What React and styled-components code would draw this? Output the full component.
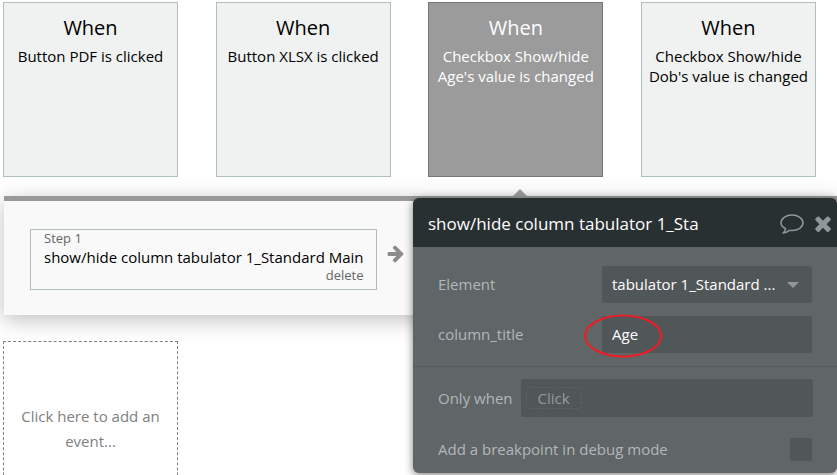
import React from 'react';
import styled, { createGlobalStyle } from 'styled-components';

const GlobalStyle = createGlobalStyle`
  * {
    box-sizing: border-box;
  }
  body {
    margin: 0;
    background: #fff;
    color: #000;
    font-family: "Open Sans", "Noto Sans", sans-serif;
    font-size: 15px;
  }
  button, input, select {
    font: inherit;
  }
`;

const Workflow = styled.main`
  position: relative;
  height: 100vh;
  padding: 2px 0 0 3px;
  overflow: hidden;
`;

const Events = styled.section`
  display: flex;
  justify-content: space-between;
  padding-right: 21px;
`;

const EventCard = styled.button`
  display: flex;
  flex-direction: column;
  align-items: center;
  width: 175px;
  height: 175px;
  padding: 11px 6px;
  border: 1px solid ${({ $active }) => ($active ? '#757575' : '#b0bec0')};
  border-radius: 0;
  background: ${({ $active }) => ($active ? '#9b9b9b' : '#f0f2f1')};
  color: ${({ $active }) => ($active ? '#fff' : '#000')};
  line-height: 20px;
  text-align: center;
`;

const When = styled.span`
  margin-bottom: 4px;
  font-size: 20px;
  line-height: 28px;
`;

const Actions = styled.section`
  position: relative;
  display: flex;
  align-items: center;
  gap: 10px;
  height: 119px;
  margin: 19px 0 26px 1px;
  padding: 3px 26px 0;
  border-top: 5px solid #999;
  background: #f9f9f9;
  box-shadow: 0 5px 20px rgba(0, 0, 0, 0.25);
`;

const Pointer = styled.span`
  position: absolute;
  top: -12px;
  left: 508px;
  border: solid transparent;
  border-width: 0 8px 8px;
  border-bottom-color: #999;
`;

const Step = styled.article`
  display: flex;
  flex-direction: column;
  padding: 0 12px 5px 13px;
  border: 1px solid #b0bec0;
  white-space: nowrap;
`;

const StepNumber = styled.span`
  color: #666;
  font-size: 13px;
  line-height: 17px;
`;

const StepName = styled.span`
  line-height: 20px;
`;

const Delete = styled.button`
  align-self: flex-end;
  padding: 0;
  border: 0;
  background: none;
  color: #666;
  font-size: 13px;
  line-height: 17px;
`;

const NextStep = styled.svg`
  margin-bottom: 12px;
  fill: #8c8c8c;
`;

const AddEvent = styled.button`
  display: block;
  width: 175px;
  height: 175px;
  padding: 0 12px;
  border: 1px dashed #808080;
  background: none;
  color: #808080;
  line-height: 25px;
`;

const Editor = styled.aside`
  position: absolute;
  top: 198px;
  right: 0;
  width: 424px;
  border-radius: 6px;
  background: #606568;
  box-shadow: 0 2px 8px rgba(0, 0, 0, 0.5);
  color: #b2b7b9;
`;

const EditorHeader = styled.header`
  display: flex;
  align-items: center;
  height: 49px;
  padding: 2px 6px 0 15px;
  border-radius: 6px 6px 0 0;
  background: #293031;
`;

const Title = styled.h2`
  width: 270px;
  margin: 0 auto 0 0;
  overflow: hidden;
  color: #fff;
  font-size: 17px;
  font-weight: 400;
  line-height: 24px;
  white-space: nowrap;
`;

const IconButton = styled.button`
  display: flex;
  margin-left: 11px;
  padding: 1px 0 0;
  border: 0;
  background: none;
  color: #8d989c;
`;

const Fields = styled.div`
  display: flex;
  flex-direction: column;
  gap: 13px;
  padding: 19px 25px 13px;
`;

const Conditions = styled.div`
  display: flex;
  flex-direction: column;
  gap: 21px;
  padding: 12px 24px 12px 25px;
  border-top: 1px solid #53595c;
`;

const Field = styled.div`
  display: flex;
  align-items: center;
  justify-content: space-between;
`;

const Label = styled.label`
  padding-bottom: 2px;
  line-height: 20px;
`;

const Control = styled.div`
  position: relative;
  width: 210px;
  height: 37px;
`;

const Select = styled.select`
  appearance: none;
  width: 100%;
  height: 100%;
  padding: 0 30px 1px 10px;
  border: 0;
  border-radius: 2px;
  background: #515659;
  color: #fff;
`;

const TextInput = styled.input`
  width: 100%;
  height: 100%;
  padding: 0 10px 2px;
  border: 0;
  border-radius: 2px;
  background: #515659;
  color: #fff;
`;

const Caret = styled.span`
  position: absolute;
  top: 16px;
  right: 13px;
  border: solid transparent;
  border-width: 6px 6px 0;
  border-top-color: #92989a;
  pointer-events: none;
`;

const Highlight = styled.svg`
  position: absolute;
  top: -2px;
  left: -19px;
  pointer-events: none;
`;

const Expression = styled.div`
  display: flex;
  flex: 1;
  align-items: center;
  height: 38px;
  margin-left: 8px;
  padding-left: 5px;
  border-radius: 2px;
  background: #515659;
`;

const Click = styled.button`
  height: 22px;
  padding: 0 11px;
  border: 1px dashed #5d6265;
  border-radius: 4px;
  background: none;
  color: #999;
  line-height: 20px;
`;

const Checkbox = styled.input`
  appearance: none;
  width: 22px;
  height: 23px;
  margin: 0 1px 0 0;
  border-radius: 2px;
  background: #515659;
`;

const events = [
  { name: 'Button PDF is clicked' },
  { name: 'Button XLSX is clicked' },
  { name: "Checkbox Show/hide Age's value is changed", active: true },
  { name: "Checkbox Show/hide Dob's value is changed" },
];

const ArrowIcon = () => (
  <NextStep width="17" height="18" viewBox="0 120 1472 1680" aria-hidden="true">
    <path d="M1472 960q0 54-37 91l-651 651q-39 37-91 37-51 0-90-37l-75-75q-38-38-38-91t38-91l293-293H117q-52 0-84.5-37.5T0 1024V896q0-53 32.5-90.5T117 768h704L528 474q-38-36-38-90t38-90l75-75q38-38 90-38 53 0 91 38l651 651q37 35 37 90z" />
  </NextStep>
);

const CommentIcon = () => (
  <svg width="24" height="20" viewBox="0 0 24 20" fill="none" stroke="currentColor" strokeWidth="1.5" aria-hidden="true">
    <path d="M5.6 14.6C2.5 13.2 1 11.2 1 8.8 1 4.5 5.9 1 12 1s11 3.5 11 7.8-4.9 7.8-11 7.8c-.9 0-1.8-.1-2.6-.2-1.9 1.6-4 2.5-6.4 2.7 1.4-1.2 2.3-2.7 2.6-4.5z" strokeLinejoin="round" />
  </svg>
);

const CloseIcon = () => (
  <svg width="16" height="16" viewBox="302 334 1188 1220" fill="currentColor" aria-hidden="true">
    <path d="M1490 1322q0 40-28 68l-136 136q-28 28-68 28t-68-28l-294-294-294 294q-28 28-68 28t-68-28l-136-136q-28-28-28-68t28-68l294-294-294-294q-28-28-28-68t28-68l136-136q28-28 68-28t68 28l294 294 294-294q28-28 68-28t68 28l136 136q28 28 28 68t-28 68l-294 294 294 294q28 28 28 68z" />
  </svg>
);

const PropertyEditor = () => (
  <Editor>
    <EditorHeader>
      <Title>show/hide column tabulator 1_Standard Main</Title>
      <IconButton aria-label="Comment"><CommentIcon /></IconButton>
      <IconButton aria-label="Close"><CloseIcon /></IconButton>
    </EditorHeader>
    <Fields>
      <Field>
        <Label htmlFor="element">Element</Label>
        <Control>
          <Select id="element">
            <option>tabulator 1_Standard ...</option>
          </Select>
          <Caret />
        </Control>
      </Field>
      <Field>
        <Label htmlFor="column-title">column_title</Label>
        <Control>
          <TextInput id="column-title" defaultValue="Age" />
          <Highlight width="80" height="44" aria-hidden="true">
            <ellipse cx="40" cy="22" rx="38" ry="20.5" fill="none" stroke="#ee1c25" strokeWidth="2" />
          </Highlight>
        </Control>
      </Field>
    </Fields>
    <Conditions>
      <Field>
        <span>Only when</span>
        <Expression>
          <Click>Click</Click>
        </Expression>
      </Field>
      <Field>
        <Label htmlFor="breakpoint">Add a breakpoint in debug mode</Label>
        <Checkbox id="breakpoint" type="checkbox" />
      </Field>
    </Conditions>
  </Editor>
);

const App = () => (
  <>
    <GlobalStyle />
    <Workflow>
      <Events>
        {events.map(({ name, active }) => (
          <EventCard key={name} $active={active}>
            <When>When</When>
            {name}
          </EventCard>
        ))}
      </Events>
      <Actions>
        <Pointer />
        <Step>
          <StepNumber>Step 1</StepNumber>
          <StepName>show/hide column tabulator 1_Standard Main</StepName>
          <Delete>delete</Delete>
        </Step>
        <ArrowIcon />
      </Actions>
      <AddEvent>Click here to add an event...</AddEvent>
      <PropertyEditor />
    </Workflow>
  </>
);

export default App;
